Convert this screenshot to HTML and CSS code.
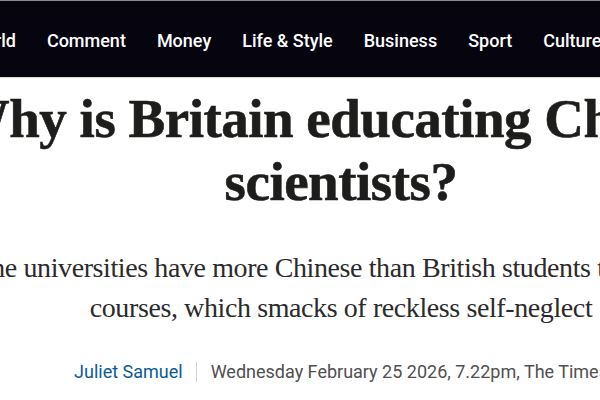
FILE: index.html
```html
<!DOCTYPE html>
<html lang="en">
<head>
<meta charset="utf-8">
<title>Why is Britain educating Chinese scientists?</title>
<link rel="stylesheet" href="styles.css">
</head>
<body>
<nav class="nav">
  <ul class="nav-list">
    <li>World</li>
    <li>Comment</li>
    <li>Money</li>
    <li>Life &amp; Style</li>
    <li>Business</li>
    <li>Sport</li>
    <li>Culture</li>
    <li>Puzzles</li>
  </ul>
</nav>
<main class="article">
  <h1 class="headline">Why is Britain educating Chinese scientists?</h1>
  <p class="standfirst">Some universities have more Chinese than British students taking Stem courses, which smacks of reckless self-neglect</p>
  <div class="byline">
    <span class="author">Juliet Samuel</span>
    <span class="sep"></span>
    <span class="date">Wednesday February 25 2026, 7.22pm, The Times</span>
  </div>
</main>
</body>
</html>
```

FILE: styles.css
```css
html, body {
  margin: 0;
  padding: 0;
  background: #ffffff;
  overflow: hidden;
}
body {
  width: 600px;
  height: 400px;
}
.nav {
  box-sizing: border-box;
  height: 78px;
  padding-top: 2px;
  background: #05040f;
  border-top: 1px solid #8a8a8a;
  border-bottom: 1px solid #d8d8d8;
  display: flex;
  align-items: center;
  overflow: hidden;
}
.nav-list {
  list-style: none;
  margin: 0 0 0 -31px;
  padding: 0;
  display: flex;
  gap: 31px;
  white-space: nowrap;
  font-family: Roboto, "Liberation Sans", sans-serif;
  font-weight: 500;
  font-size: 18px;
  color: #ffffff;
}
.article {
  width: 1000px;
  margin-left: -159px;
  text-align: center;
}
.headline {
  margin: 9px 0 0;
  font-family: "Liberation Serif", serif;
  font-weight: 700;
  font-size: 55px;
  line-height: 63px;
  letter-spacing: -0.5px;
  -webkit-text-stroke: 0.6px #1d1d1b;
  color: #1d1d1b;
}
.standfirst {
  margin: 35px 0 0;
  padding: 0 80px;
  font-family: "Liberation Serif", serif;
  font-size: 28px;
  line-height: 40px;
  letter-spacing: -0.4px;
  color: #2b2b2b;
}
.byline {
  margin-top: 32px;
  display: flex;
  justify-content: center;
  align-items: center;
  font-family: Roboto, "Liberation Sans", sans-serif;
  font-size: 18px;
  line-height: 24px;
  white-space: nowrap;
}
.author {
  color: #0b5a97;
}
.sep {
  width: 1px;
  height: 20px;
  background: #d0d0d0;
  margin: 0 14px 0 13px;
}
.date {
  color: #505050;
}
```
